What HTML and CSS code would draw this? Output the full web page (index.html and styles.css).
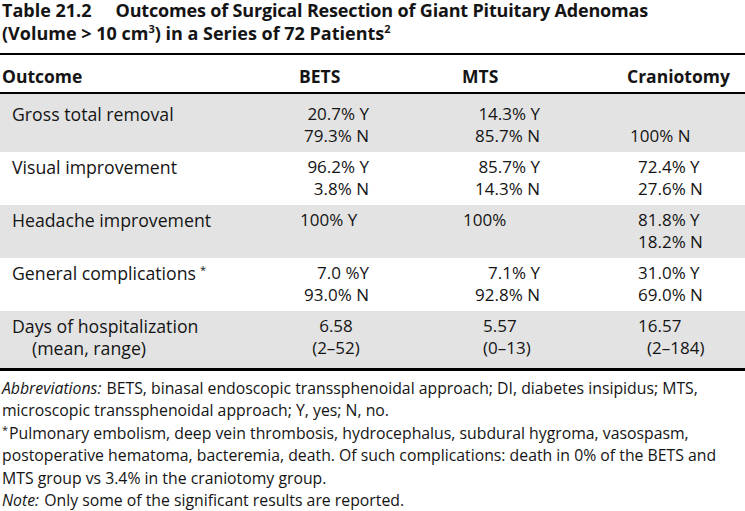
FILE: index.html
```html
<!DOCTYPE html>
<html lang="en">
<head>
<meta charset="utf-8">
<title>Table 21.2</title>
<link rel="stylesheet" href="styles.css">
</head>
<body>
<div class="page">
  <h1 class="title"><span class="tnum">Table 21.2</span><span class="tl1">Outcomes of Surgical Resection of Giant Pituitary Adenomas</span><br>(Volume &gt; 10 cm<sup>3</sup>) in a Series of 72 Patients<sup>2</sup></h1>
  <div class="table">
    <div class="row head">
      <div class="lbl">Outcome</div>
      <div class="bets"><span class="hb">BETS</span></div>
      <div class="mts"><span class="hm">MTS</span></div>
      <div class="cran"><span class="hc">Craniotomy</span></div>
    </div>
    <div class="row gray first">
      <div class="lbl">Gross total removal</div>
      <div class="bets"><div class="rb">20.7% Y</div><div class="rb">79.3% N</div></div>
      <div class="mts"><div class="rm">14.3% Y</div><div class="rm">85.7% N</div></div>
      <div class="cran"><div class="e">&nbsp;</div><div class="c0">100% N</div></div>
    </div>
    <div class="row">
      <div class="lbl">Visual improvement</div>
      <div class="bets"><div class="rb">96.2% Y</div><div class="rb">3.8% N</div></div>
      <div class="mts"><div class="rm">85.7% Y</div><div class="rm">14.3% N</div></div>
      <div class="cran"><div class="c1">72.4% Y</div><div class="c1">27.6% N</div></div>
    </div>
    <div class="row gray">
      <div class="lbl">Headache improvement</div>
      <div class="bets"><div class="lb">100% Y</div></div>
      <div class="mts"><div class="lm">100%</div></div>
      <div class="cran"><div class="c1">81.8% Y</div><div class="c1">18.2% N</div></div>
    </div>
    <div class="row">
      <div class="lbl">General complications<sup class="ast">*</sup></div>
      <div class="bets"><div class="rb">7.0 %Y</div><div class="rb">93.0% N</div></div>
      <div class="mts"><div class="rm">7.1% Y</div><div class="rm">92.8% N</div></div>
      <div class="cran"><div class="c1">31.0% Y</div><div class="c1">69.0% N</div></div>
    </div>
    <div class="row gray last">
      <div class="lbl">Days of hospitalization<div class="sub">(mean, range)</div></div>
      <div class="bets"><div class="cb">6.58</div><div class="cb">(2–52)</div></div>
      <div class="mts"><div class="dm">5.57</div><div class="dm">(0–13)</div></div>
      <div class="cran"><div class="c1">16.57</div><div class="c2">(2–184)</div></div>
    </div>
  </div>
  <div class="notes">
    <p><em>Abbreviations:</em> BETS, binasal endoscopic transsphenoidal approach; DI, diabetes insipidus; MTS, microscopic transsphenoidal approach; Y, yes; N, no.</p>
    <p><sup class="ast">*</sup>Pulmonary embolism, deep vein thrombosis, hydrocephalus, subdural hygroma, vasospasm, postoperative hematoma, bacteremia, death. Of such complications: death in 0% of the BETS and MTS group vs 3.4% in the craniotomy group.</p>
    <p><em>Note:</em> Only some of the significant results are reported.</p>
  </div>
</div>
</body>
</html>
```

FILE: styles.css
```css
* {
  box-sizing: border-box;
  margin: 0;
  padding: 0;
}

body {
  margin: 0;
  background: #ffffff;
  color: #141414;
  font-family: "Open Sans", "Noto Sans", sans-serif;
}

.page {
  width: 745px;
}

.title {
  font-size: 18px;
  font-weight: 700;
  line-height: 23px;
  margin-top: -1.5px;
  padding: 0 0 8.5px 2px;
}

.title .tnum {
  margin-right: 24px;
}

.title .tl1 {
  letter-spacing: -0.17px;
}

.title sup {
  font-size: 11px;
  line-height: 0;
  vertical-align: 7px;
}

.table {
  border-top: 2px solid #000;
  border-bottom: 3px solid #000;
}

.row {
  display: grid;
  grid-template-columns: 298px 163px 166px 1fr;
  font-size: 17px;
  line-height: 22px;
  padding: 4px 0 5px;
}

.row .lbl {
  font-size: 17.7px;
}

.row.head {
  font-weight: 700;
  font-size: 17.5px;
  padding: 10px 0 5px;
  border-bottom: 2px solid #000;
}

.row.head .lbl {
  font-size: 17.5px;
  padding-left: 2px;
}

.row.gray {
  background: #e3e3e3;
}

.row.first {
  padding-top: 9px;
}

.row.last {
  padding-bottom: 9px;
}

.lbl {
  padding-left: 12px;
}

.hb { padding-left: 1px; }
.hm { padding-left: 1px; }
.hc { padding-left: 0; }

.rb {
  width: 71px;
  text-align: right;
}

.lb {
  padding-left: 2px;
}

.cb {
  width: 76px;
  text-align: center;
}

.rm {
  width: 79px;
  text-align: right;
}

.lm {
  padding-left: 2px;
}

.dm {
  padding-left: 22px;
}

.c0 { padding-left: 3px; }
.c1 { padding-left: 11px; }
.c2 { padding-left: 20px; }

.sub {
  padding-left: 20px;
}

.ast {
  font-size: 11px;
  line-height: 0;
  vertical-align: 6px;
  margin-left: 4px;
}

.notes {
  font-size: 15.8px;
  line-height: 22.4px;
  padding: 6px 0 0 2px;
}

.notes em {
  padding-right: 1px;
}

.notes .ast {
  margin-left: 0;
  margin-right: 1px;
  vertical-align: 5px;
}
```
